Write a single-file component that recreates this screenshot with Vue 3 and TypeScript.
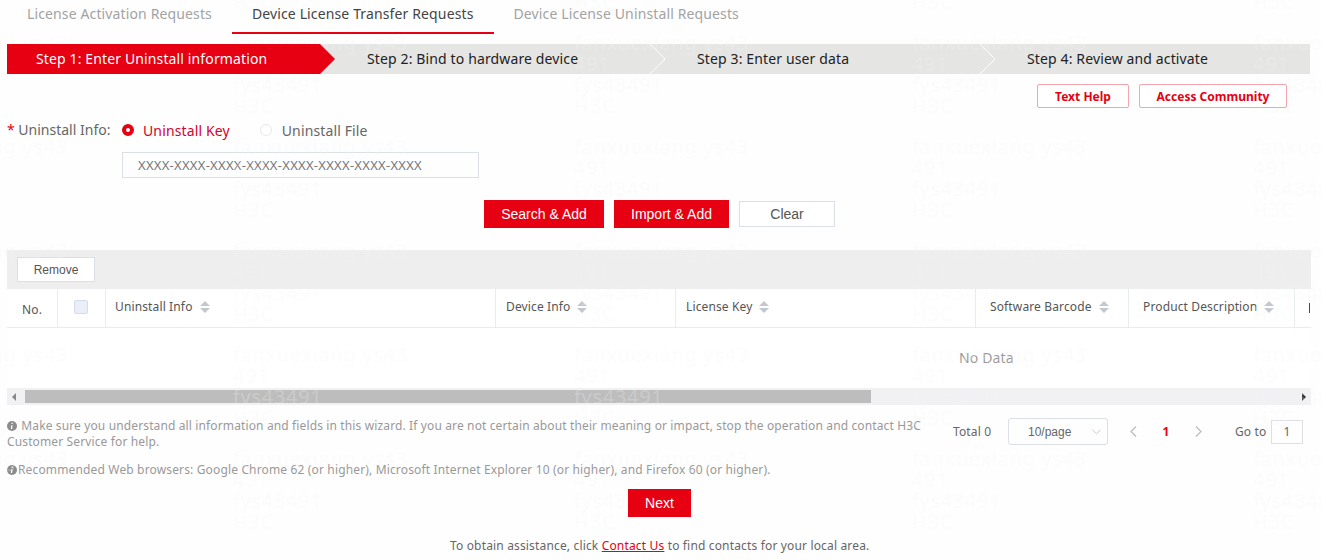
<script setup lang="ts">
const tabs = [
  { label: 'License Activation Requests', active: false },
  { label: 'Device License Transfer Requests', active: true },
  { label: 'Device License Uninstall Requests', active: false },
]
const steps = [
  'Step 1: Enter Uninstall information',
  'Step 2: Bind to hardware device',
  'Step 3: Enter user data',
  'Step 4: Review and activate',
]
const columns = [
  { label: 'Uninstall Info', width: 390, cls: 'first' },
  { label: 'Device Info', width: 180, cls: '' },
  { label: 'License Key', width: 300, cls: '' },
  { label: 'Software Barcode', width: 153, cls: 'wide' },
  { label: 'Product Description', width: 166, cls: 'wide' },
]
const xs = [-107, 233, 574, 912, 1253]
const ys = [-72, 32, 136, 240, 344, 448]
const marks = ys.flatMap((y) => xs.map((x) => ({ x, y })))
</script>

<template>
  <div class="page">
    <nav class="tabs">
      <a v-for="t in tabs" :key="t.label" class="tab" :class="{ active: t.active }">{{ t.label }}</a>
    </nav>

    <div class="steps">
      <div v-for="(s, i) in steps" :key="s" class="step" :class="{ current: i === 0 }">
        <span class="step-text">{{ s }}</span>
        <svg v-if="i > 0 && i < 3" class="chev" viewBox="0 0 16 30" width="16" height="30">
          <path d="M0 0 L15 15 L0 30" fill="none" stroke="#fff" stroke-width="1" />
        </svg>
      </div>
    </div>

    <div class="help">
      <button class="help-btn help-one">Text Help</button>
      <button class="help-btn help-two">Access Community</button>
    </div>

    <div class="form-row">
      <label class="form-label"><i>*</i> Uninstall Info:</label>
      <span class="radio on"></span><span class="radio-text on-text">Uninstall Key</span>
      <span class="radio off"></span><span class="radio-text second-text">Uninstall File</span>
    </div>
    <div class="key-input">XXXX-XXXX-XXXX-XXXX-XXXX-XXXX-XXXX-XXXX</div>

    <div class="actions">
      <button class="primary search">Search &amp; Add</button>
      <button class="primary import">Import &amp; Add</button>
      <button class="clear">Clear</button>
    </div>

    <section class="table">
      <div class="toolbar"><button class="remove">Remove</button></div>
      <div class="thead">
        <div class="th no">No.</div>
        <div class="th check"><span class="box"></span></div>
        <div v-for="c in columns" :key="c.label" class="th" :class="c.cls" :style="{ width: c.width + 'px' }">
          <span>{{ c.label }}</span>
          <svg class="sort" viewBox="0 0 10 12" width="10" height="12">
            <path d="M5 0 L10 5 H0 Z M0 7 H10 L5 12 Z" fill="#c3c7cf" />
          </svg>
        </div>
        <div class="th last"><span class="sliver"></span></div>
      </div>
      <div class="tbody">No Data</div>
      <div class="hscroll">
        <svg class="arrow" viewBox="0 0 4 8" width="4" height="8"><path d="M4 0 L0 4 L4 8 Z" fill="#888" /></svg>
        <div class="track"><div class="thumb"></div></div>
        <svg class="arrow" viewBox="0 0 4 8" width="4" height="8"><path d="M0 0 L4 4 L0 8 Z" fill="#333" /></svg>
      </div>
    </section>

    <div class="info-row">
      <p class="note first">
        <svg class="i-icon" viewBox="0 0 10 10" width="10" height="10">
          <circle cx="5" cy="5" r="5" fill="#8c8c8c" />
          <path d="M5.2 1.8 V3 M4.9 4.2 L4.5 8" stroke="#fff" stroke-width="1.3" fill="none" />
        </svg>
        Make sure you understand all information and fields in this wizard. If you are not certain about their meaning or impact, stop the operation and contact H3C Customer Service for help.
      </p>
      <div class="pager">
        <span class="total">Total 0</span>
        <div class="select">
          <span>10/page</span>
          <svg viewBox="0 0 10 6" width="9" height="6"><path d="M0.5 0.5 L5 5 L9.5 0.5" fill="none" stroke="#c0c4cc" /></svg>
        </div>
        <svg class="pg-arrow prev" viewBox="0 0 7 11" width="7" height="11"><path d="M6 0.5 L1 5.5 L6 10.5" fill="none" stroke="#bbb" stroke-width="1.2" /></svg>
        <b class="cur">1</b>
        <svg class="pg-arrow" viewBox="0 0 7 11" width="7" height="11"><path d="M1 0.5 L6 5.5 L1 10.5" fill="none" stroke="#bbb" stroke-width="1.2" /></svg>
        <span class="goto">Go to</span>
        <span class="go-input">1</span>
      </div>
    </div>

    <p class="note second">
      <svg class="i-icon tight" viewBox="0 0 10 10" width="10" height="10">
        <circle cx="5" cy="5" r="5" fill="#8c8c8c" />
        <path d="M5.2 1.8 V3 M4.9 4.2 L4.5 8" stroke="#fff" stroke-width="1.3" fill="none" />
      </svg>Recommended Web browsers: Google Chrome 62 (or higher), Microsoft Internet Explorer 10 (or higher), and Firefox 60 (or higher).
    </p>

    <div class="next-row"><button class="primary next">Next</button></div>

    <p class="foot">To obtain assistance, click <a>Contact Us</a> to find contacts for your local area.</p>

    <div class="watermarks" aria-hidden="true">
      <div v-for="(m, i) in marks" :key="i" class="mark" :style="{ left: m.x + 'px', top: m.y + 'px' }">
        fanxuexiang ys43<br />491<br />fys43491<br />H3C
      </div>
    </div>
  </div>
</template>

<style>
html, body { margin: 0; padding: 0; background: #fefefe; overflow: hidden; }
</style>

<style scoped>
.page {
  position: relative;
  width: 1321px;
  height: 560px;
  overflow: hidden;
  box-sizing: border-box;
  padding-left: 7px;
  background: #fefefe;
  font-family: "Noto Sans", "Open Sans", sans-serif;
  font-size: 12px;
  letter-spacing: 0.13px;
  color: #666;
}
button { font-family: "Liberation Sans", Arial, sans-serif; letter-spacing: 0; cursor: pointer; padding: 0; }
p { margin: 0; }

.tabs { display: flex; height: 34px; }
.tab {
  box-sizing: border-box;
  height: 34px;
  padding: 3px 20px 0;
  font-size: 14px;
  line-height: 22px;
  color: #a3a3a3;
  white-space: nowrap;
}
.tab.active { color: #444; border-bottom: 2px solid #e60012; }

.steps {
  display: flex;
  width: 1303px;
  height: 30px;
  margin-top: 10px;
  background: #e5e5e4;
  overflow: hidden;
}
.step {
  position: relative;
  flex: none;
  width: 330px;
  height: 30px;
  box-sizing: border-box;
  padding-left: 30px;
  font-size: 14px;
  line-height: 30px;
  color: #222;
  white-space: nowrap;
}
.step.current {
  width: 313px;
  padding-left: 29px;
  margin-right: 17px;
  background: #e60012;
  color: #fff;
  z-index: 3;
}
.step.current::after {
  content: "";
  position: absolute;
  left: 100%;
  top: 0;
  border-left: 15px solid #e60012;
  border-top: 15px solid transparent;
  border-bottom: 15px solid transparent;
}
.chev { position: absolute; right: 1px; top: 0; z-index: 2; }

.help { display: flex; margin: 10px 0 0 1030px; height: 24px; }
.help-btn {
  height: 24px;
  box-sizing: border-box;
  background: #fff;
  border: 1px solid #f3a5ad;
  border-radius: 2px;
  color: #e60012;
  font-weight: 700;
  font-size: 12px;
  font-family: "Noto Sans", sans-serif;
  position: relative;
  z-index: 3;
}
.help-one { width: 92px; }
.help-two { width: 148px; margin-left: 10px; }

.form-row { display: flex; align-items: center; height: 20px; margin-top: 12px; font-size: 14px; }
.form-label { width: 115px; white-space: nowrap; color: #666; letter-spacing: 0; margin-top: -1px; }
.form-label i { color: #e60012; font-style: normal; }
.radio { box-sizing: border-box; width: 12px; height: 12px; border-radius: 50%; flex: none; }
.radio.on { border: 4px solid #e60012; background: #fff; }
.radio.off { border: 1px solid #e6e8ee; background: #fff; margin-left: 30px; }
.radio-text { margin-left: 9px; white-space: nowrap; }
.radio-text.second-text { margin-left: 10px; }
.on-text { color: #d7002a; }

.key-input {
  box-sizing: border-box;
  width: 357px;
  height: 26px;
  margin: 12px 0 0 115px;
  padding-left: 15px;
  border: 1px solid #dcdfe6;
  font-size: 13px;
  letter-spacing: 0.28px;
  line-height: 24px;
  color: #777;
  white-space: nowrap;
}

.actions { display: flex; align-items: center; height: 28px; margin: 22px 0 0 477px; }
.primary {
  height: 28px;
  border: none;
  background: #e60012;
  color: #fff;
  font-size: 14px;
  position: relative;
  z-index: 3;
}
.search { width: 120px; }
.import { width: 115px; margin-left: 10px; }
.clear {
  width: 96px;
  height: 26px;
  margin-left: 10px;
  box-sizing: border-box;
  background: #fff;
  border: 1px solid #dcdfe6;
  color: #555;
  font-size: 14px;
}

.table { width: 1304px; height: 155px; margin-top: 22px; overflow: hidden; }
.toolbar { display: flex; align-items: center; height: 39px; padding-left: 10px; background: #eee; }
.remove {
  width: 78px;
  height: 25px;
  box-sizing: border-box;
  background: #fff;
  border: 1px solid #dcdfe6;
  color: #555;
  font-size: 12px;
}
.thead { display: flex; height: 39px; box-sizing: border-box; border-bottom: 1px solid #e8ebf0; background: #fff; }
.th {
  box-sizing: border-box;
  flex: none;
  display: flex;
  align-items: center;
  gap: 7px;
  height: 38px;
  padding: 0 10px 3px;
  border-right: 1px solid #e8ebf0;
  color: #555;
  white-space: nowrap;
}
.th.first { padding-left: 9px; }
.th.wide { padding-left: 14px; }
.th.no { width: 51px; justify-content: center; padding: 2px 0 0; }
.th.check { width: 48px; justify-content: center; padding: 0 1px 2px 0; }
.th.last { border: none; padding: 0 14px; width: 15px; }
.sliver { display: block; flex: none; width: 1px; height: 10px; background: #c06; }
.box {
  display: block;
  box-sizing: border-box;
  width: 14px;
  height: 14px;
  border: 1px solid #d5dbe8;
  border-radius: 2px;
  background: #e9eef8;
}
.sort { flex: none; }
.tbody {
  height: 60px;
  padding-left: 952px;
  font-size: 14px;
  line-height: 60px;
  color: #999;
  background: #fff;
}
.hscroll { display: flex; align-items: center; height: 17px; padding: 0 5px; background: #f1f1f3; }
.arrow { flex: none; }
.track { flex: 1; padding-left: 9px; }
.thumb { width: 846px; height: 13px; background: #bdbdbd; }

.info-row { display: flex; align-items: flex-start; margin-top: 13px; }
.note { color: #999; font-size: 12px; line-height: 16px; }
.note.first { width: 946px; flex: none; }
.i-icon { vertical-align: -1px; margin-right: 1px; }
.note.second { margin-top: 12px; white-space: nowrap; letter-spacing: 0.15px; }

.pager { display: flex; align-items: center; height: 27px; color: #666; white-space: nowrap; }
.total { width: 55px; }
.select {
  box-sizing: border-box;
  display: flex;
  align-items: center;
  justify-content: space-between;
  width: 100px;
  height: 27px;
  padding: 0 6px 0 19px;
  border: 1px solid #dcdfe6;
  border-radius: 3px;
  font-family: "Liberation Sans", sans-serif;
  letter-spacing: 0;
}
.pg-arrow { flex: none; }
.pg-arrow.prev { margin-left: 22px; }
.cur { width: 58px; text-align: center; color: #e60012; font-size: 12px; }
.goto { margin-left: 33px; width: 36px; }
.go-input {
  box-sizing: border-box;
  width: 32px;
  height: 24px;
  border: 1px solid #dcdfe6;
  text-align: center;
  line-height: 22px;
}

.next-row { display: flex; margin: 11px 0 0 621px; }
.next { width: 63px; }

.foot { margin-top: 21px; padding-left: 443px; line-height: 16px; white-space: nowrap; letter-spacing: 0.16px; }
.foot a { color: #e60012; text-decoration: underline; }

.watermarks { position: absolute; inset: 0; pointer-events: none; z-index: 2; }
.mark {
  position: absolute;
  font-size: 20px;
  line-height: 21px;
  letter-spacing: 0.7px;
  color: rgba(245, 245, 245, 0.25);
  white-space: nowrap;
}
</style>
